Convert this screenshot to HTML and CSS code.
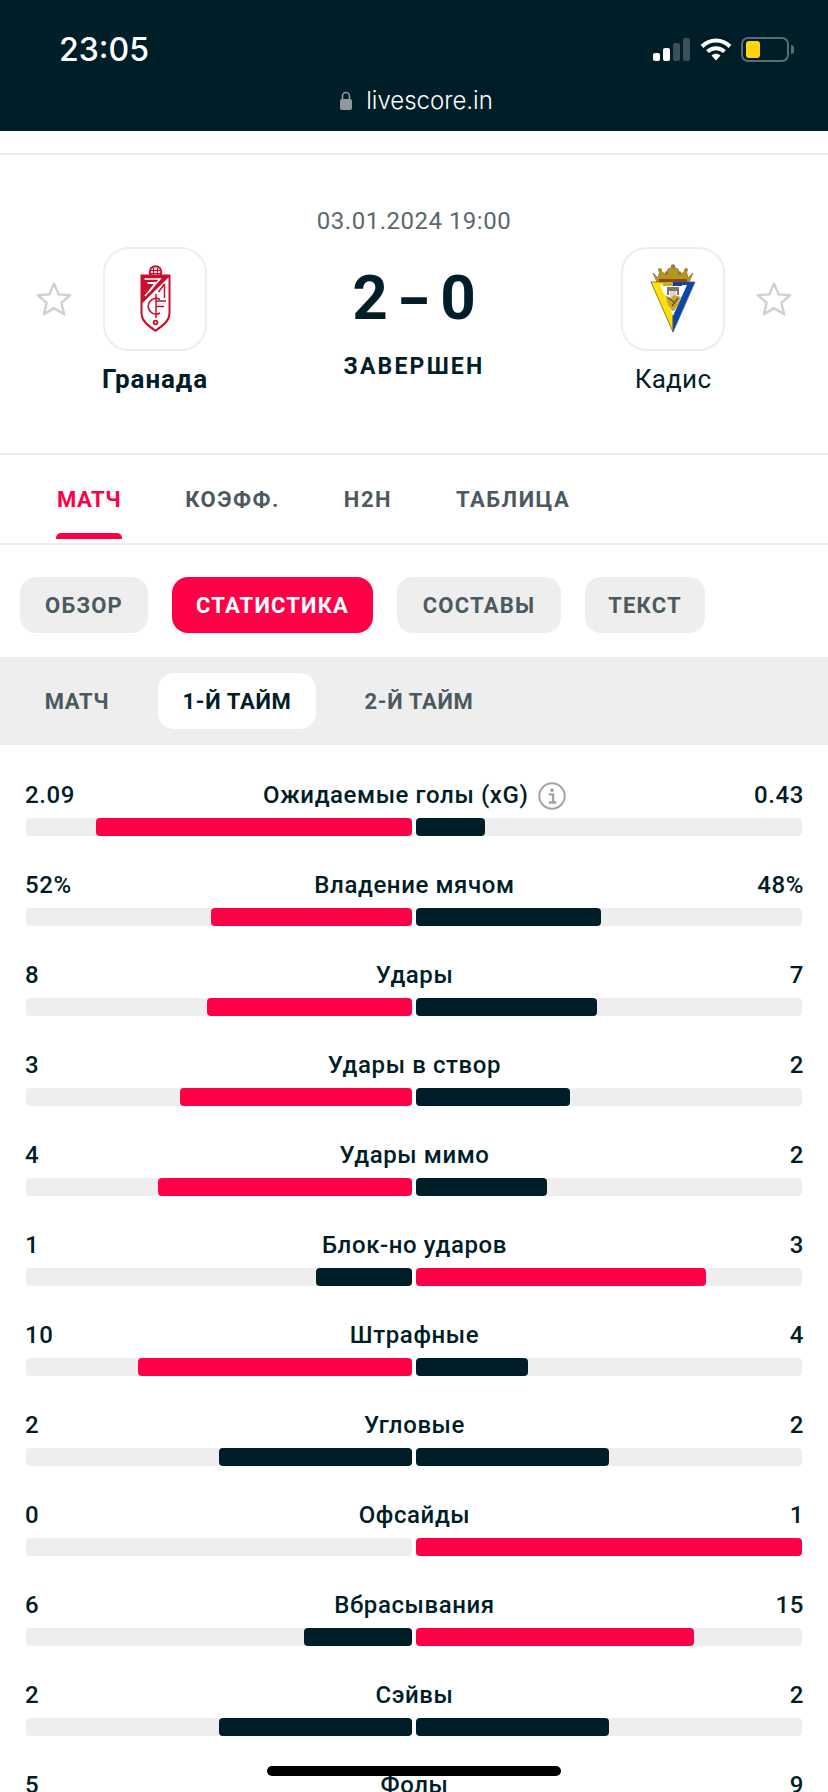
FILE: index.html
```html
<!DOCTYPE html>
<html lang="ru">
<head>
    <meta charset="UTF-8">
    <meta name="viewport" content="width=device-width, initial-scale=1.0">
    <title>Гранада - Кадис</title>
    <link rel="stylesheet" href="styles.css">
</head>
<body>
<div class="page">
    <!-- Статус бар -->
    <div class="phone-bar">
        <div class="status-row">
            <div class="clock">23:05</div>
            <div class="status-icons">
                <div class="signal">
                    <span class="sig sig-1"></span>
                    <span class="sig sig-2"></span>
                    <span class="sig sig-3"></span>
                    <span class="sig sig-4"></span>
                </div>
                <svg class="wifi" width="32" height="24" viewBox="0 0 32 24">
                    <path d="M2 9.500C10 1.500 22 1.500 30 9.500" fill="none" stroke="#fff" stroke-width="4"/>
                    <path d="M7.500 14.500C12.500 10 19.500 10 24.500 14.500" fill="none" stroke="#fff" stroke-width="4"/>
                    <path d="M11.500 18.500L16 23.500L20.500 18.500C18 16 14 16 11.500 18.500Z" fill="#fff"/>
                </svg>
                <div class="battery"><span class="battery-level"></span></div>
                <span class="battery-nub"></span>
            </div>
        </div>
        <div class="url-row">
            <svg width="12" height="19" viewBox="0 0 12 19">
                <path d="M2.500 9V5a3.500 3.500 0 0 1 7 0v4" fill="none" stroke="#8f989d" stroke-width="1.600"/>
                <rect x="0" y="8" width="12" height="11" rx="2" fill="#8f989d"/>
            </svg>
            <span>livescore.in</span>
        </div>
    </div>

    <div class="top-strip"></div>

    <!-- Матч -->
    <div class="match">
        <div class="match-date">03.01.2024 19:00</div>
        <div class="match-row">
            <svg class="star" width="36" height="36" viewBox="0 0 36 36">
                <path d="M18 2.500L22.600 13.400L34.300 14.200L25.300 21.800L28.200 33.300L18 27.100L7.800 33.300L10.700 21.800L1.700 14.200L13.400 13.400Z" fill="none" stroke="#ccd2d3" stroke-width="2.400" stroke-linejoin="round"/>
            </svg>
            <div class="team">
                <div class="team-logo">
                    <svg width="33" height="68" viewBox="0 0 33 68">
                        <circle cx="16.500" cy="7" r="6.800" fill="#c8102e"/>
                        <circle cx="16.500" cy="7" r="4.800" fill="#f7e3e6"/>
                        <path d="M11.500 5.500H21.500M11.500 8.500H21.500M14.500 2.500V11.500M18.500 2.500V11.500" stroke="#c8102e" stroke-width="1"/>
                        <path d="M1.500 9.500H31.500V48C31.500 58 22 63 16.500 67C11 63 1.500 58 1.500 48Z" fill="#c8102e"/>
                        <path d="M3.500 38L29.500 12.500V48C29.500 56 21 61 16.500 64.500C12 61 3.500 56 3.500 48Z" fill="#fff"/>
                        <path d="M5.500 14H21L6 31" fill="none" stroke="#fff" stroke-width="1.500"/>
                        <path d="M8.500 18H16.500L10 27" fill="none" stroke="#fff" stroke-width="1.800"/>
                        <path d="M25.500 19V33M25.500 19L19.500 27" fill="none" stroke="#c8102e" stroke-width="1.500"/>
                        <path d="M21 34.500A7.800 7.800 0 1 0 21 48" fill="none" stroke="#c8102e" stroke-width="1.700"/>
                        <path d="M17 29V53M17 36H27M17 41.500H25" fill="none" stroke="#c8102e" stroke-width="1.500"/>
                        <circle cx="16.500" cy="57.500" r="2.800" fill="#c8102e"/>
                        <circle cx="16.500" cy="57.500" r="1" fill="#fff"/>
                    </svg>
                </div>
                <div class="team-name team-name-win">Гранада</div>
            </div>
            <div class="score-box">
                <div class="score">
                    <span>2</span>
                    <span class="score-dash">-</span>
                    <span>0</span>
                </div>
                <div class="match-status">ЗАВЕРШЕН</div>
            </div>
            <div class="team">
                <div class="team-logo">
                    <svg width="46" height="70" viewBox="0 0 46 70">
                        <path d="M3 9L8 14L10 6L16 11L18 5L23 3L28 5L30 11L36 6L38 14L43 9L39 18H7Z" fill="#b8961e" stroke="#7f6a20" stroke-width=".7"/>
                        <circle cx="23" cy="2.500" r="2.200" fill="#85805f"/>
                        <circle cx="10" cy="6" r="2" fill="#a68a2c"/>
                        <circle cx="36" cy="6" r="2" fill="#a68a2c"/>
                        <circle cx="16.500" cy="9" r="1.800" fill="#8e7a30"/>
                        <circle cx="29.500" cy="9" r="1.800" fill="#8e7a30"/>
                        <rect x="9" y="15" width="28" height="3" fill="#8a4a18"/>
                        <path d="M1 18H23V68Z" fill="#ffe000" stroke="#6c6420" stroke-width=".8"/>
                        <path d="M45 18H23V68Z" fill="#0b46ab" stroke="#4f5a70" stroke-width=".8"/>
                        <path d="M10 21H37L23 52Z" fill="#fff"/>
                        <rect x="13" y="18" width="10" height="4" fill="#c9a92a"/>
                        <rect x="23" y="18" width="9" height="4" fill="#173f9a"/>
                        <path d="M17 23H29V31H27V27H19V31H17Z" fill="#77776e"/>
                        <path d="M20 27H26V34H20Z" fill="#d8d8d0"/>
                        <path d="M15 31L21 34L24 31L31 33L28 41L24 47H22L18 41Z" fill="#c9a92a"/>
                        <path d="M18 34L24 38M28 34L22 42" stroke="#55553f" stroke-width="1.400"/>
                    </svg>
                </div>
                <div class="team-name">Кадис</div>
            </div>
            <svg class="star" width="36" height="36" viewBox="0 0 36 36">
                <path d="M18 2.500L22.600 13.400L34.300 14.200L25.300 21.800L28.200 33.300L18 27.100L7.800 33.300L10.700 21.800L1.700 14.200L13.400 13.400Z" fill="none" stroke="#ccd2d3" stroke-width="2.400" stroke-linejoin="round"/>
            </svg>
        </div>
    </div>

    <!-- Вкладки -->
    <div class="tabs">
        <div class="tab tab-active">МАТЧ</div>
        <div class="tab">КОЭФФ.</div>
        <div class="tab">H2H</div>
        <div class="tab">ТАБЛИЦА</div>
    </div>

    <div class="pills">
        <div class="pill">ОБЗОР</div>
        <div class="pill pill-active">СТАТИСТИКА</div>
        <div class="pill">СОСТАВЫ</div>
        <div class="pill">ТЕКСТ</div>
    </div>

    <div class="periods">
        <div class="period">МАТЧ</div>
        <div class="period period-active">1-Й ТАЙМ</div>
        <div class="period">2-Й ТАЙМ</div>
    </div>

    <!-- Статистика -->
    <div class="stats">
        <div class="stat">
            <div class="stat-head">
                <span>2.09</span>
                <span class="stat-name">Ожидаемые голы (xG)
                    <svg class="info" width="28" height="28" viewBox="0 0 26 26">
                        <circle cx="13" cy="13" r="11.800" fill="none" stroke="#a3a3a3" stroke-width="1.800"/>
                        <circle cx="13" cy="7.500" r="1.800" fill="#a3a3a3"/>
                        <path d="M10 11.500H14V18.500M10 19H17" fill="none" stroke="#a3a3a3" stroke-width="2.200"/>
                    </svg>
                </span>
                <span>0.43</span>
            </div>
            <div class="stat-bar">
                <div class="half half-left"><div class="fill fill-red" style="width:81.9%"></div></div>
                <div class="half"><div class="fill fill-dark" style="width:17.9%"></div></div>
            </div>
        </div>
        <div class="stat">
            <div class="stat-head"><span>52%</span><span class="stat-name">Владение мячом</span><span>48%</span></div>
            <div class="stat-bar">
                <div class="half half-left"><div class="fill fill-red" style="width:52.1%"></div></div>
                <div class="half"><div class="fill fill-dark" style="width:47.9%"></div></div>
            </div>
        </div>
        <div class="stat">
            <div class="stat-head"><span>8</span><span class="stat-name">Удары</span><span>7</span></div>
            <div class="stat-bar">
                <div class="half half-left"><div class="fill fill-red" style="width:53.1%"></div></div>
                <div class="half"><div class="fill fill-dark" style="width:46.9%"></div></div>
            </div>
        </div>
        <div class="stat">
            <div class="stat-head"><span>3</span><span class="stat-name">Удары в створ</span><span>2</span></div>
            <div class="stat-bar">
                <div class="half half-left"><div class="fill fill-red" style="width:60.1%"></div></div>
                <div class="half"><div class="fill fill-dark" style="width:39.9%"></div></div>
            </div>
        </div>
        <div class="stat">
            <div class="stat-head"><span>4</span><span class="stat-name">Удары мимо</span><span>2</span></div>
            <div class="stat-bar">
                <div class="half half-left"><div class="fill fill-red" style="width:65.8%"></div></div>
                <div class="half"><div class="fill fill-dark" style="width:33.9%"></div></div>
            </div>
        </div>
        <div class="stat">
            <div class="stat-head"><span>1</span><span class="stat-name">Блок-но ударов</span><span>3</span></div>
            <div class="stat-bar">
                <div class="half half-left"><div class="fill fill-dark" style="width:24.9%"></div></div>
                <div class="half"><div class="fill fill-red" style="width:75.1%"></div></div>
            </div>
        </div>
        <div class="stat">
            <div class="stat-head"><span>10</span><span class="stat-name">Штрафные</span><span>4</span></div>
            <div class="stat-bar">
                <div class="half half-left"><div class="fill fill-red" style="width:71%"></div></div>
                <div class="half"><div class="fill fill-dark" style="width:29%"></div></div>
            </div>
        </div>
        <div class="stat">
            <div class="stat-head"><span>2</span><span class="stat-name">Угловые</span><span>2</span></div>
            <div class="stat-bar">
                <div class="half half-left"><div class="fill fill-dark" style="width:50%"></div></div>
                <div class="half"><div class="fill fill-dark" style="width:50%"></div></div>
            </div>
        </div>
        <div class="stat">
            <div class="stat-head"><span>0</span><span class="stat-name">Офсайды</span><span>1</span></div>
            <div class="stat-bar">
                <div class="half half-left"></div>
                <div class="half"><div class="fill fill-red" style="width:100%"></div></div>
            </div>
        </div>
        <div class="stat">
            <div class="stat-head"><span>6</span><span class="stat-name">Вбрасывания</span><span>15</span></div>
            <div class="stat-bar">
                <div class="half half-left"><div class="fill fill-dark" style="width:28%"></div></div>
                <div class="half"><div class="fill fill-red" style="width:72%"></div></div>
            </div>
        </div>
        <div class="stat">
            <div class="stat-head"><span>2</span><span class="stat-name">Сэйвы</span><span>2</span></div>
            <div class="stat-bar">
                <div class="half half-left"><div class="fill fill-dark" style="width:50%"></div></div>
                <div class="half"><div class="fill fill-dark" style="width:50%"></div></div>
            </div>
        </div>
        <div class="stat">
            <div class="stat-head"><span>5</span><span class="stat-name">Фолы</span><span>9</span></div>
            <div class="stat-bar">
                <div class="half half-left"><div class="fill fill-dark" style="width:35.7%"></div></div>
                <div class="half"><div class="fill fill-red" style="width:64.3%"></div></div>
            </div>
        </div>
    </div>

    <div class="home-indicator"></div>
</div>
</body>
</html>
```

FILE: styles.css
```css
body {
    margin: 0;
    background-color: white;
    font-family: Roboto, "Liberation Sans", sans-serif;
    color: #001e28;
}
.page {
    position: relative;
    width: 828px;
    height: 1792px;
    overflow: hidden;
}

/* статус бар */
.phone-bar {
    background-color: #001e28;
    height: 131px;
    color: white;
}
.status-row {
    display: flex;
    justify-content: space-between;
    align-items: center;
    height: 50px;
    padding: 24px 34px 1px 59px;
}
.clock {
    font-family: Inter, sans-serif;
    font-size: 32px;
    font-weight: 500;
}
.status-icons {
    display: flex;
    align-items: center;
}
.signal {
    display: flex;
    align-items: flex-end;
    gap: 3px;
    height: 23px;
    margin-right: 10px;
}
.sig {
    width: 7px;
    border-radius: 2px;
    background-color: white;
}
.sig-1 { height: 8px; }
.sig-2 { height: 13px; }
.sig-3 { height: 18px; background-color: #3b5057; }
.sig-4 { height: 23px; background-color: #3b5057; }
.wifi {
    margin-right: 9px;
}
.battery {
    box-sizing: border-box;
    width: 48px;
    height: 25px;
    padding: 2px 3px;
    border: 2px solid #5b6c72;
    border-radius: 7px;
}
.battery-level {
    display: block;
    width: 14px;
    height: 100%;
    border-radius: 3px;
    background-color: #ffd60a;
}
.battery-nub {
    width: 3px;
    height: 9px;
    margin-left: 2px;
    border-radius: 0 3px 3px 0;
    background-color: #5b6c72;
}
.url-row {
    display: flex;
    justify-content: center;
    align-items: center;
    gap: 14px;
    margin-top: 11px;
    padding-left: 5px;
    font-family: Inter, sans-serif;
    font-size: 24px;
    font-weight: 300;
}

.top-strip {
    height: 22px;
    border-bottom: 2px solid #eeeeee;
}

/* матч */
.match {
    height: 298px;
    border-bottom: 2px solid #eeeeee;
}
.match-date {
    padding-top: 52px;
    line-height: 28px;
    font-size: 24px;
    letter-spacing: 0.5px;
    text-align: center;
    color: #5a686e;
}
.match-row {
    display: flex;
    gap: 31px;
    align-items: flex-start;
    margin-top: 12px;
    padding: 0 36px;
}
.star {
    margin-top: 34px;
}
.team {
    width: 104px;
    display: flex;
    flex-direction: column;
    align-items: center;
}
.team-logo {
    box-sizing: border-box;
    width: 104px;
    height: 104px;
    border: 2px solid #eeeeee;
    border-radius: 26px;
    display: flex;
    justify-content: center;
    align-items: center;
}
.team-name {
    margin-top: 11px;
    font-size: 26px;
    line-height: 34px;
    letter-spacing: 0.3px;
    white-space: nowrap;
}
.team-name-win {
    font-weight: 700;
    letter-spacing: 0.9px;
}
.score-box {
    flex: 1;
    display: flex;
    flex-direction: column;
    align-items: center;
    padding-top: 13px;
}
.score {
    display: flex;
    justify-content: center;
    gap: 14px;
    height: 78px;
    font-size: 62px;
    font-weight: 700;
    line-height: 76px;
}
.score-dash {
    transform: scaleX(1.5);
}
.match-status {
    margin-top: 14px;
    font-size: 23px;
    line-height: 30px;
    font-weight: 700;
    letter-spacing: 2.2px;
}

/* вкладки */
.tabs {
    display: flex;
    gap: 64px;
    height: 88px;
    padding: 0 57px;
    border-bottom: 2px solid #eeeeee;
}
.tab {
    position: relative;
    height: 84px;
    box-sizing: border-box;
    padding-top: 30px;
    line-height: 30px;
    font-size: 22px;
    font-weight: 700;
    letter-spacing: 1.5px;
    color: #4c5a60;
}
.tab-active {
    color: #ff0046;
    letter-spacing: 0.6px;
}
.tab-active::after {
    content: "";
    position: absolute;
    left: -1px;
    right: -1px;
    bottom: 0;
    height: 6px;
    border-radius: 5px 5px 0 0;
    background-color: #ff0046;
}
.pills {
    display: grid;
    grid-template-columns: 128px 201px 164px 120px;
    gap: 24px;
    padding: 32px 20px 24px;
}
.pill {
    height: 56px;
    line-height: 58px;
    border-radius: 16px;
    text-align: center;
    background-color: #eeeeee;
    font-size: 22px;
    font-weight: 700;
    letter-spacing: 1.2px;
    color: #4c5a60;
}
.pill-active {
    background-color: #ff0046;
    color: white;
}
.periods {
    display: grid;
    grid-template-columns: 114px 158px 158px;
    gap: 24px;
    padding: 16px 20px;
    background-color: #eeeeee;
}
.period {
    height: 56px;
    line-height: 58px;
    border-radius: 16px;
    text-align: center;
    font-size: 22px;
    font-weight: 700;
    letter-spacing: 0.7px;
    color: #4c5a60;
}
.period-active {
    background-color: white;
    color: #001e28;
}

/* статистика */
.stats {
    padding: 35px 26px 0;
}
.stat {
    margin-bottom: 34px;
}
.stat-head {
    display: flex;
    justify-content: space-between;
    height: 38px;
    margin: 0 -2px 0 -1px;
    line-height: 30px;
    font-size: 24px;
    font-weight: 500;
    letter-spacing: 0.6px;
    position: relative;
}
.stat-name {
    position: absolute;
    left: 0;
    right: 0;
    text-align: center;
}
.info {
    vertical-align: -7px;
    margin-left: 3px;
}
.stat-bar {
    display: flex;
    gap: 4px;
    height: 18px;
}
.half {
    flex: 1;
    display: flex;
    border-radius: 4px;
    background-color: #eeeeee;
}
.half-left {
    justify-content: flex-end;
}
.fill {
    border-radius: 4px;
}
.fill-red {
    background-color: #ff0046;
}
.fill-dark {
    background-color: #001e28;
}
.home-indicator {
    position: absolute;
    left: 267px;
    top: 1766px;
    width: 294px;
    height: 10px;
    border-radius: 5px;
    background-color: black;
}
```
